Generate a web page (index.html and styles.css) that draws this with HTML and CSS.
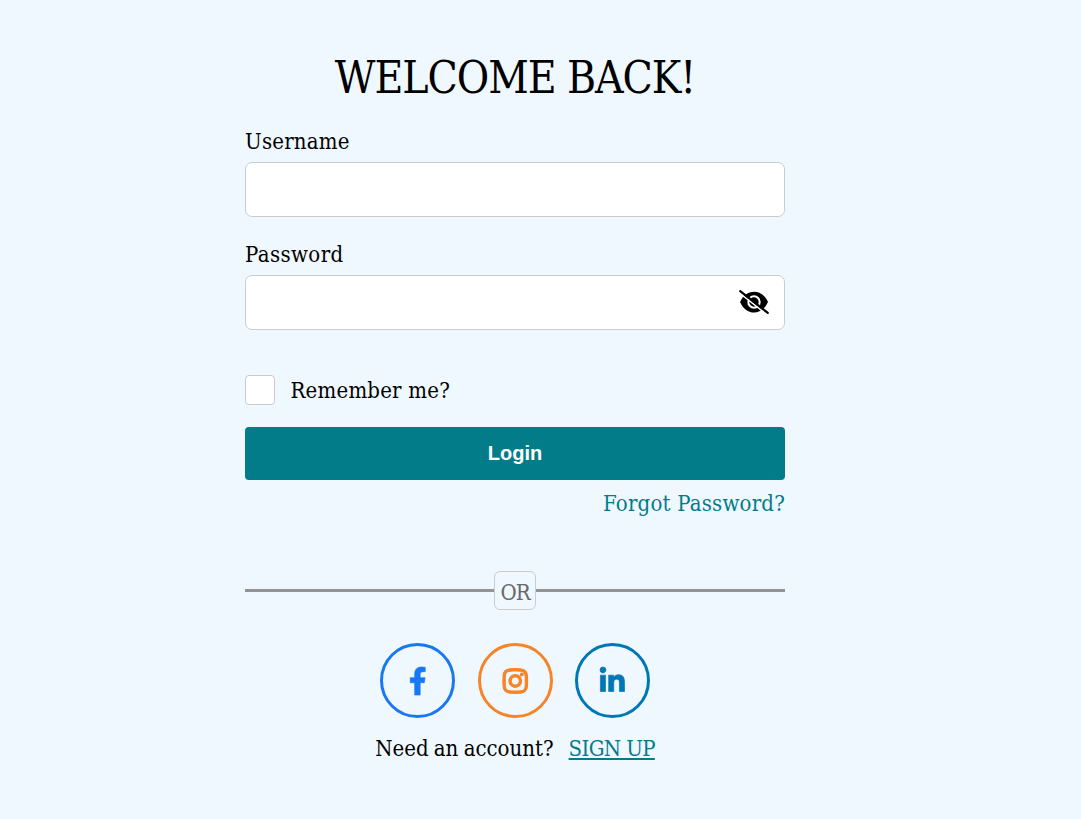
FILE: index.html
```html
<!DOCTYPE html>
<html lang="en">
<head>
<meta charset="utf-8">
<title>Login</title>
<link rel="stylesheet" href="styles.css">
</head>
<body>
<main class="login">
  <h1 class="title">WELCOME BACK!</h1>
  <form class="form">
    <label class="label" for="user">Username</label>
    <input class="input" id="user" type="text">
    <label class="label second" for="pass">Password</label>
    <div class="field">
      <input class="input" id="pass" type="password">
      <svg class="eye" viewBox="0 0 30 24">
        <path d="M1 12C4 5.500 9 1.800 15 1.800S26 5.500 29 12C26 18.500 21 22.600 15 22.600S4 18.500 1 12Z"/>
        <circle class="iris" cx="15" cy="12" r="5.700"/>
        <path d="M15 8.500a3.600 3.600 0 1 1-3 5.600c2 .2 3.600-1.200 3.600-3.200 0-.9-.2-1.700-.6-2.400z"/>
        <path class="gap" d="M0 2.600L28 24.600"/>
        <path class="slash" d="M1.200 1.200L28.800 22.900"/>
      </svg>
    </div>
    <label class="remember"><span class="box"></span><span>Remember me?</span></label>
    <button class="submit" type="button">Login</button>
    <a class="forgot">Forgot Password?</a>
  </form>
  <div class="divider"><span class="line"></span><span class="or">OR</span><span class="line"></span></div>
  <div class="social">
    <a class="circle facebook"><svg viewBox="0 0 320 512"><path d="M279.14 288l14.22-92.66h-88.91v-60.13c0-25.35 12.42-50.06 52.24-50.06h40.42V6.26S260.43 0 225.36 0c-73.22 0-121.08 44.38-121.08 124.72v70.62H22.89V288h81.39v224h100.17V288z"/></svg></a>
    <a class="circle instagram"><svg viewBox="0 0 448 512"><path d="M224.1 141c-63.6 0-114.9 51.3-114.9 114.9s51.3 114.9 114.9 114.9S339 319.500 339 255.900 287.700 141 224.100 141zm0 189.600c-41.100 0-74.700-33.500-74.700-74.700s33.500-74.700 74.700-74.700 74.700 33.500 74.700 74.700-33.600 74.700-74.700 74.700zm146.400-194.300c0 14.900-12 26.800-26.800 26.800-14.900 0-26.800-12-26.800-26.800s12-26.800 26.800-26.800 26.800 12 26.800 26.800zm76.100 27.200c-1.700-35.900-9.900-67.700-36.200-93.900-26.200-26.200-58-34.400-93.900-36.200-37-2.100-147.900-2.100-184.900 0-35.800 1.700-67.600 9.900-93.900 36.100s-34.400 58-36.200 93.900c-2.100 37-2.100 147.900 0 184.900 1.700 35.900 9.900 67.700 36.200 93.900s58 34.400 93.900 36.200c37 2.100 147.900 2.100 184.900 0 35.900-1.700 67.700-9.900 93.900-36.200 26.200-26.200 34.400-58 36.200-93.900 2.100-37 2.100-147.800 0-184.800zM398.800 388c-7.800 19.600-22.900 34.700-42.600 42.600-29.500 11.700-99.500 9-132.100 9s-102.700 2.600-132.100-9c-19.600-7.800-34.700-22.900-42.600-42.600-11.700-29.500-9-99.500-9-132.100s-2.600-102.700 9-132.100c7.800-19.600 22.900-34.700 42.600-42.600 29.500-11.700 99.500-9 132.100-9s102.700-2.600 132.100 9c19.600 7.800 34.700 22.900 42.600 42.600 11.700 29.500 9 99.500 9 132.100s2.700 102.700-9 132.100z"/></svg></a>
    <a class="circle linkedin"><svg viewBox="0 0 448 512"><path d="M100.280 448H7.400V148.900h92.880zM53.790 108.100C24.090 108.100 0 83.500 0 53.800a53.790 53.790 0 0 1 107.580 0c0 29.700-24.100 54.300-53.790 54.300zM447.900 448h-92.680V302.400c0-34.700-.7-79.200-48.290-79.200-48.290 0-55.690 37.700-55.690 76.700V448h-92.780V148.900h89.080v40.800h1.300c12.400-23.500 42.690-48.300 87.880-48.300 94 0 111.280 61.900 111.280 142.300V448z"/></svg></a>
  </div>
  <p class="signup"><span class="need">Need an account?</span><a class="link">SIGN UP</a></p>
</main>
</body>
</html>
```
FILE: styles.css
```css
* { box-sizing: border-box; }
body {
  margin: 0;
  background: #f0f8ff;
  color: #000;
  font-family: "DejaVu Serif Condensed", "DejaVu Serif", serif;
  font-stretch: condensed;
  font-size: 22px;
  line-height: 32px;
  letter-spacing: 0.2px;
}
.login {
  width: 540px;
  margin-left: 245px;
  padding-top: 48px;
}
.title {
  margin: 0;
  height: 59px;
  font-size: 44px;
  line-height: 60px;
  font-weight: 400;
  letter-spacing: -1.05px;
  text-align: center;
  white-space: nowrap;
}
.form { display: flex; flex-direction: column; }
.label { height: 36px; margin-top: 19px; }
.label.second { margin-top: 22px; letter-spacing: 0.4px; }
.input {
  display: block;
  width: 100%;
  height: 55px;
  padding: 0 15px;
  border: 1px solid #ccc;
  border-radius: 7px;
  background: #fff;
  font-size: 22px;
}
.field { position: relative; }
.eye { position: absolute; right: 16px; top: 15px; width: 30px; height: 24px; }
.iris { fill: none; stroke: #fff; stroke-width: 2px; }
.gap { stroke: #fff; stroke-width: 1.5px; }
.slash { stroke: #000; stroke-width: 2.2px; stroke-linecap: round; }
.remember {
  display: flex;
  align-items: center;
  gap: 15.5px;
  height: 30px;
  margin-top: 45px;
  line-height: 34px;
}
.remember span:last-child { padding-top: 2px; }
.box {
  width: 30px;
  height: 30px;
  border: 1px solid #ccc;
  border-radius: 4px;
  background: #fff;
}
.submit {
  height: 53px;
  margin-top: 22px;
  padding: 0;
  border: 0;
  border-radius: 4px;
  background: #037c8a;
  color: #fff;
  font: bold 20px "Liberation Sans", Arial, sans-serif;
}
.forgot { align-self: flex-end; height: 30px; margin-top: 8px; color: #037c8a; }
.divider {
  display: flex;
  align-items: center;
  height: 39px;
  margin-top: 53px;
}
.line { flex: 1; height: 3px; background: #949494; }
.or {
  width: 42px;
  height: 39px;
  border: 1px solid #ccc;
  border-radius: 6px;
  color: #696969;
  line-height: 42px;
  letter-spacing: -1px;
  text-align: center;
}
.social {
  display: flex;
  justify-content: center;
  gap: 22.5px;
  margin-top: 33px;
}
.circle {
  display: flex;
  align-items: center;
  justify-content: center;
  width: 75px;
  height: 75px;
  border: 3px solid;
  border-radius: 50%;
}
.circle svg {
  height: 28px;
  overflow: visible;
  fill: currentColor;
  stroke: currentColor;
  stroke-width: 12px;
}
.instagram svg { stroke-width: 22px; }
.facebook { color: #1877f2; }
.instagram { color: #f58529; }
.linkedin { color: #0077b5; }
.signup {
  display: flex;
  justify-content: center;
  gap: 15px;
  margin: 15px 0 0;
}
.need { letter-spacing: 0; word-spacing: -1px; }
.link {
  color: #037c8a;
  letter-spacing: -0.65px;
  text-decoration: underline;
  text-decoration-thickness: 2px;
  text-underline-offset: 2px;
}
```
